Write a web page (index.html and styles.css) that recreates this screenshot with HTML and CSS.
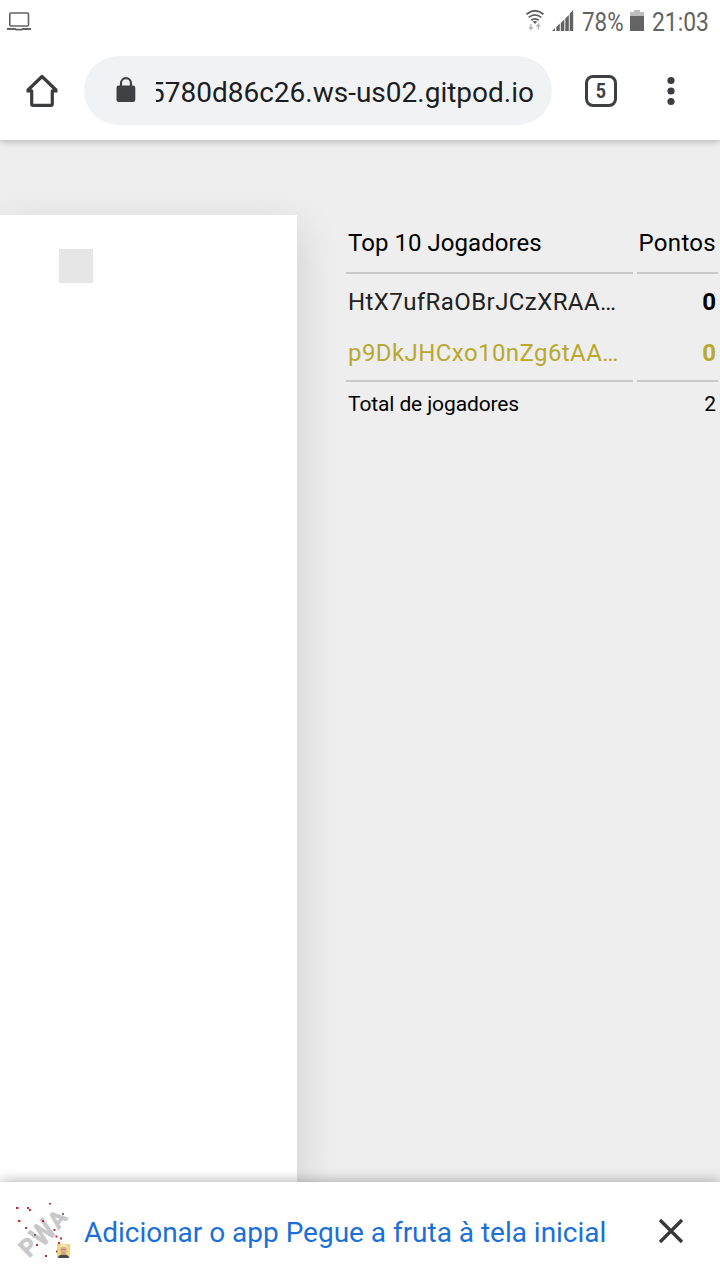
FILE: index.html
```html
<!DOCTYPE html>
<html lang="pt-BR">
<head>
<meta charset="utf-8">
<title>Pegue a fruta</title>
<link rel="stylesheet" href="styles.css">
</head>
<body>
<div class="screen">
  <header class="chrome">
    <div class="status">
      <svg class="laptop" width="26" height="20" viewBox="0 0 26 20" fill="none" stroke="#626262"><rect x="3.800" y="2" width="18.700" height="13" rx="1" stroke-width="1.600"/><path d="M1 18h8l1.500.6h5l1.500-.6h8" stroke-width="1.900"/></svg>
      <div class="status-icons">
        <svg class="wifi" width="20" height="24" viewBox="0 0 20 24" fill="none" stroke="#5d5d5d" stroke-width="1.800"><path d="M1.500 5.200Q10-1.800 18.500 5.200M3.700 8.400Q10 3.400 16.300 8.400M6.300 11.200Q10 8.400 13.700 11.200"/><path d="M7.700 12.600Q10 11.200 12.300 12.600L10 15z" fill="#5d5d5d" stroke="none"/><path d="M6.500 15v3H8.500L5.800 21.500 3.500 18H5.200V15zM12.700 20.500v-3h-2L13.300 14l2.700 3.500h-1.900v3z" fill="#b5b5b5" stroke="none"/></svg>
        <svg class="signal" width="22" height="22" viewBox="0 0 22 22" fill="#626262"><path d="M0 21l3-3v3zM4.300 21v-4l3.500-3.500V21zM8.800 21v-8l3.500-3.500V21zM13.300 21V8.500L16.800 5v16zM17.700 21V3.500L21.200 0v21z"/></svg>
        <span class="battery-text">78%</span>
        <svg class="battery" width="14" height="22" viewBox="0 0 14 22"><path d="M0 2h4V0h6v2h4v5H0z" fill="#bdbdbd"/><path d="M0 6h14v15H0z" fill="#646464"/></svg>
        <span class="clock">21:03</span>
      </div>
    </div>
    <div class="toolbar">
      <svg class="home" width="34" height="34" viewBox="0 0 34 34" fill="none" stroke="#3b3c3f" stroke-width="3.200"><path d="M1.500 16.800H6.700V30q0 1.300 1.300 1.300h18q1.300 0 1.300-1.300V16.800h5.200M2.500 16.500 17 2.500l14.500 14" stroke-linejoin="round"/></svg>
      <div class="address">
        <svg class="lock" width="20" height="26" viewBox="0 0 20 26"><path d="M5 10V6.200a5 5 0 0 1 10 0V10" fill="none" stroke="#404145" stroke-width="2.200"/><rect x=".5" y="8.600" width="18.800" height="16.400" rx="2.200" fill="#404145"/></svg>
        <div class="url"><span>5780d86c26.ws-us02.gitpod.io</span></div>
      </div>
      <div class="tabs"><span>5</span></div>
      <svg class="menu" width="8" height="30" viewBox="0 0 8 30" fill="#3c3d40"><circle cx="4" cy="4.500" r="3.600"/><circle cx="4" cy="15" r="3.600"/><circle cx="4" cy="25.500" r="3.600"/></svg>
    </div>
  </header>
  <main class="game">
    <div class="board"><div class="player"></div></div>
    <div class="ranking">
      <div class="cell head"><span class="title">Top 10 Jogadores</span></div><div class="cell head num points">Pontos</div>
      <div class="cell row first"><span class="name">HtX7ufRaOBrJCzXRAA…</span></div><div class="cell row num score first">0</div>
      <div class="cell row me last"><span class="name">p9DkJHCxo10nZg6tAA…</span></div><div class="cell row num score me last">0</div>
      <div class="cell foot">Total de jogadores</div><div class="cell foot num">2</div>
    </div>
  </main>
  <footer class="install">
    <svg class="pwa" width="60" height="60" viewBox="0 0 60 60">
      <g class="pwa-word">
        <text transform="translate(15 57.500) rotate(-44) scale(.95 1)" font-size="25">P</text>
        <text transform="translate(28.500 47) rotate(-46) scale(.85 1)" font-size="30">W</text>
        <text transform="translate(44.500 29) rotate(-50)" font-size="23">A</text>
      </g>
      <g fill="#c8292b"><path d="M2 6h2.500v2H2zM13 6h2v2h-2zM15 8h2v2h-2zM35 2h2v1.500h-2zM4 19h2.500v2H4zM11 26h2v2h-2zM28 19h2v2h-2zM39.500 28h2v2h-2zM41.500 34.500h2v2h-2zM46 36.500h2v2h-2zM44 41h2v2h-2zM22 43h2v2h-2zM31 54h2v2h-2z"/></g>
      <path d="M20 33h2v2h-2zM48 12h2v2h-2z" fill="#6f7478"/>
      <rect x="43" y="43" width="13" height="14" fill="#f0d978"/><path d="M44 57q0-3 4-3.500h3q4 .5 4 3.500z" fill="#4d4650"/><ellipse cx="49.500" cy="49.500" rx="3.200" ry="4.300" fill="#dcae98"/><path d="M46 47q.5-3.500 3.500-3.500t3.500 3.500l-1.500-1.500h-4z" fill="#f6efdb"/><path d="M47 48.500h5M48.500 52h2" stroke="#a86b60" stroke-width=".7"/><path d="M42 49.500h1.500v2H42z" fill="#924630"/>
    </svg>
    <span class="install-text">Adicionar o app Pegue a fruta à tela inicial</span>
    <svg class="close" width="26" height="26" viewBox="0 0 26 26" fill="none" stroke="#38393b" stroke-width="3.300"><path d="m2 2 22 22M24 2 2 24"/></svg>
  </footer>
</div>
</body>
</html>
```
FILE: styles.css
```css
* { box-sizing: border-box; }
body { margin: 0; font-family: Roboto, sans-serif; background: #fff; }
svg { display: block; flex: none; }
.screen { width: 720px; height: 1280px; display: flex; flex-direction: column; overflow: hidden; background: #eee; }
.chrome { height: 140px; flex: none; background: #fff; box-shadow: 0 1px 7px rgba(0,0,0,.28); z-index: 2; }
.status { height: 43px; display: flex; justify-content: space-between; padding: 11px 11px 0 6px; }
.status-icons { display: flex; font-size: 26px; line-height: 22px; color: #626262; white-space: nowrap; }
.wifi { margin: -2px 7px 0 0; }
.battery { margin: -1px 8px 0 6px; }
.signal { margin-right: 8px; margin-top: -1px; }
.battery-text, .clock { transform-origin: left center; }
.battery-text { width: 42px; transform: scaleX(.86); }
.clock { width: 57px; transform: scaleX(.88); }
.toolbar { height: 97px; display: flex; align-items: center; padding: 0 45px 2px 25px; }
.home { margin-right: 25px; }
.address { width: 468px; height: 69px; border-radius: 35px; background: #f1f2f4; display: flex; align-items: center; padding: 0 18px 0 32px; margin-top: -1px; }
.lock { margin-right: 20px; }
.url { flex: 1; overflow: hidden; display: flex; justify-content: flex-end; font-size: 28px; line-height: 40px; color: #1c1d21; white-space: nowrap; padding-top: 6px; padding-bottom: 1px; }
.tabs { width: 32px; height: 32px; margin-left: 33px; border: 3.5px solid #3d4043; border-radius: 8px; font-size: 21px; font-weight: 700; line-height: 26px; text-align: center; color: #3d4043; }
.tabs span { display: block; transform: scaleX(.85); }
.menu { margin-left: 50px; }
.game { flex: 1; display: flex; padding-top: 75px; background: #eee; }
.board { width: 297px; background: #fff; box-shadow: 0 14px 40px rgba(0,0,0,.15); padding: 34px 0 0 59px; }
.player { width: 34px; height: 34px; background: #e6e6e6; }
.ranking { display: grid; grid-template-columns: 287px 81px; grid-template-rows: 59px 55px 53px 46px; column-gap: 4px; align-content: start; margin-left: 49px; color: #000; font-size: 24px; }
.cell { display: flex; align-items: center; padding: 0 2px 2px; white-space: nowrap; }
.num { justify-content: flex-end; }
.head { border-bottom: 2px solid #c9c9c9; }
.points { letter-spacing: .3px; }
.row { color: #222; }
.first { padding-top: 1px; padding-bottom: 0; }
.last { border-bottom: 2px solid #c9c9c9; padding-bottom: 3px; }
.score { color: #000; font-weight: 700; }
.me { color: #b9a831; }
.foot { font-size: 21px; letter-spacing: -.12px; }
.title { letter-spacing: .05px; }
.name { letter-spacing: .42px; }
.install { height: 98px; flex: none; background: #fff; display: flex; align-items: center; padding: 0 36px 0 14px; box-shadow: 0 -1px 12px rgba(0,0,0,.3); z-index: 2; }
.pwa { overflow: visible; }
.pwa-word { font-family: Roboto, sans-serif; font-weight: 700; fill: #c8c8ca; stroke: #c8c8ca; stroke-width: .6px; }
.install-text { flex: 1; margin-left: 10px; padding-top: 3px; font-size: 28px; line-height: 34px; letter-spacing: -.02px; color: #1b6fd8; white-space: nowrap; }
```
